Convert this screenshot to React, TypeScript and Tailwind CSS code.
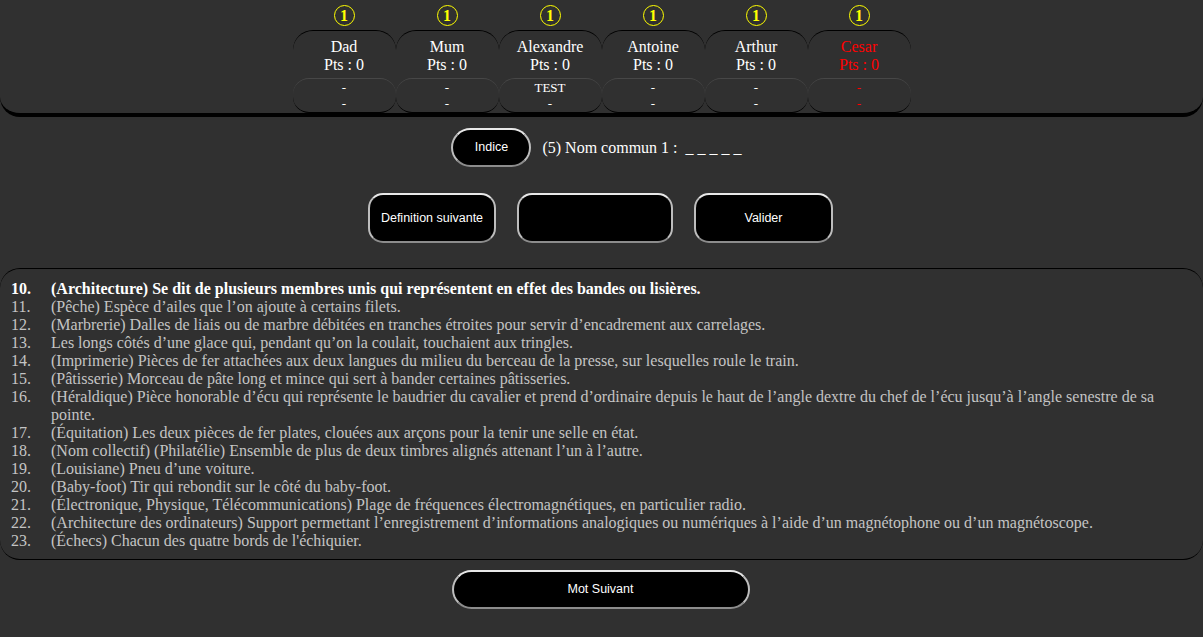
const players = [
  { name: 'Dad', pts: 0, line1: '-', line2: '-', red: false },
  { name: 'Mum', pts: 0, line1: '-', line2: '-', red: false },
  { name: 'Alexandre', pts: 0, line1: 'TEST', line2: '-', red: false },
  { name: 'Antoine', pts: 0, line1: '-', line2: '-', red: false },
  { name: 'Arthur', pts: 0, line1: '-', line2: '-', red: false },
  { name: 'Cesar', pts: 0, line1: '-', line2: '-', red: true },
];

const defs: { n: number; text: string }[] = [
  { n: 10, text: '(Architecture) Se dit de plusieurs membres unis qui représentent en effet des bandes ou lisières.' },
  { n: 11, text: '(Pêche) Espèce d’ailes que l’on ajoute à certains filets.' },
  { n: 12, text: '(Marbrerie) Dalles de liais ou de marbre débitées en tranches étroites pour servir d’encadrement aux carrelages.' },
  { n: 13, text: 'Les longs côtés d’une glace qui, pendant qu’on la coulait, touchaient aux tringles.' },
  { n: 14, text: '(Imprimerie) Pièces de fer attachées aux deux langues du milieu du berceau de la presse, sur lesquelles roule le train.' },
  { n: 15, text: '(Pâtisserie) Morceau de pâte long et mince qui sert à bander certaines pâtisseries.' },
  { n: 16, text: '(Héraldique) Pièce honorable d’écu qui représente le baudrier du cavalier et prend d’ordinaire depuis le haut de l’angle dextre du chef de l’écu jusqu’à l’angle senestre de sa pointe.' },
  { n: 17, text: '(Équitation) Les deux pièces de fer plates, clouées aux arçons pour la tenir une selle en état.' },
  { n: 18, text: '(Nom collectif) (Philatélie) Ensemble de plus de deux timbres alignés attenant l’un à l’autre.' },
  { n: 19, text: '(Louisiane) Pneu d’une voiture.' },
  { n: 20, text: '(Baby-foot) Tir qui rebondit sur le côté du baby-foot.' },
  { n: 21, text: '(Électronique, Physique, Télécommunications) Plage de fréquences électromagnétiques, en particulier radio.' },
  { n: 22, text: '(Architecture des ordinateurs) Support permettant l’enregistrement d’informations analogiques ou numériques à l’aide d’un magnétophone ou d’un magnétoscope.' },
  { n: 23, text: "(Échecs) Chacun des quatre bords de l'échiquier." },
];

const btn =
  'bg-black text-white text-[12.5px] font-["Liberation_Sans",sans-serif] border-2 border-t-[#e8e8e8] border-x-[#bdbdbd] border-b-[#8c8c8c]';

export default function App() {
  return (
    <div className="min-h-[637px] bg-[#303030] font-['Liberation_Serif',serif] text-white">
      {/* Scoreboard */}
      <div className="flex justify-center border-b-4 border-black rounded-b-[20px]">
        {players.map((p) => (
          <div key={p.name} className={`w-[103px] flex flex-col items-center ${p.red ? 'text-[#ff0000]' : 'text-white'}`}>
            <div className="mt-[5px] h-[21px] w-[21px] rounded-full border-[1.5px] border-[#ffff00] text-[#ffff00] flex items-center justify-center text-[16px] leading-none font-bold">
              1
            </div>
            <div className="mt-[4px] w-full border-t border-black rounded-t-[20px] pt-[7px] pb-[4px] text-center text-[16px] leading-[18px]">
              <div>{p.name}</div>
              <div>Pts : {p.pts}</div>
            </div>
            <div className="w-full border-t border-t-[#474747] border-b border-b-black rounded-[16px] pt-[1px] text-center text-[13px] leading-[16px]">
              <div>{p.line1}</div>
              <div>{p.line2}</div>
            </div>
          </div>
        ))}
      </div>

      {/* Hint */}
      <div className="mt-[11px] flex items-center justify-center pr-[10px]">
        <button className={`${btn} h-[39px] w-[80px] rounded-[20px]`}>Indice</button>
        <span className="ml-[11px] text-[16px]">(5) Nom commun 1 :&nbsp; _ _ _ _ _</span>
      </div>

      {/* Actions */}
      <div className="mt-[26px] flex justify-center gap-[21px] pr-[2px]">
        <button className={`${btn} h-[50px] w-[128px] rounded-[15px]`}>Definition suivante</button>
        <input className={`${btn} h-[50px] w-[156px] rounded-[15px] px-3 outline-none`} />
        <button className={`${btn} h-[50px] w-[139px] rounded-[15px]`}>Valider</button>
      </div>

      {/* Definitions */}
      <div className="mt-[25px] border-t border-b border-black rounded-[20px] pl-[11px] pr-[12px] pt-[11px] pb-[9px] text-[16px] leading-[18px]">
        {defs.map((d, i) => (
          <div key={d.n} className={`flex ${i === 0 ? 'text-white font-bold' : 'text-[#c4c4c4]'}`}>
            <div className="w-[40px] shrink-0">{d.n}.</div>
            <div>{d.text}</div>
          </div>
        ))}
      </div>

      <div className="mt-[10px] flex justify-center pr-[2px]">
        <button className={`${btn} h-[39px] w-[298px] rounded-[20px]`}>Mot Suivant</button>
      </div>
    </div>
  );
}
